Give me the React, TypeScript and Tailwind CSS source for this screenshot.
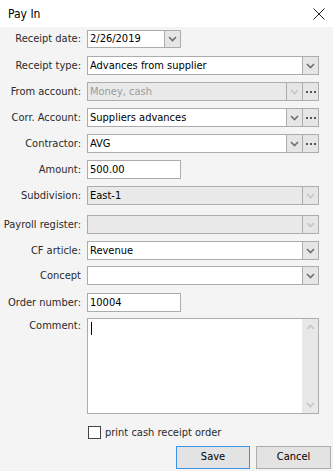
import React from "react";

const font = { fontFamily: '"DejaVu Sans Condensed", "DejaVu Sans", sans-serif' };

function Chevron({ disabled }: { disabled?: boolean }) {
  return (
    <svg width="9" height="6" viewBox="0 0 9 6">
      <path d="M1 1 L4.5 4.5 L8 1" fill="none" stroke={disabled ? "#c4c4c4" : "#6f6f6f"} strokeWidth="1.6" />
    </svg>
  );
}

function ArrowBtn({ disabled }: { disabled?: boolean }) {
  return (
    <div className="w-[16px] h-full border-l border-[#acacac] bg-[#e6e6e6] flex items-center justify-center">
      <Chevron disabled={disabled} />
    </div>
  );
}

function Dots() {
  return (
    <div className="w-[16px] h-full border border-l-0 border-[#acacac] bg-[#e6e6e6] flex items-center justify-center gap-[2px]">
      <span className="w-[2px] h-[2px] bg-[#555]" />
      <span className="w-[2px] h-[2px] bg-[#555]" />
      <span className="w-[2px] h-[2px] bg-[#555]" />
    </div>
  );
}

function Row({ label, top, children, alignTop }: { label: string; top: string; children: React.ReactNode; alignTop?: boolean }) {
  return (
    <div className={`flex ${alignTop ? "items-start" : "items-center"} ${top}`}>
      <div className={`w-[87px] pr-[6px] text-right text-[#2a2a2a] whitespace-nowrap leading-[16px] ${alignTop ? "pt-[0px]" : ""}`}>{label}</div>
      {children}
    </div>
  );
}

function Select({ value, disabled, dots, grey, greyText }: { value?: string; disabled?: boolean; dots?: boolean; grey?: boolean; greyText?: boolean }) {
  return (
    <div className="flex h-[19px] w-[232px]">
      <div className={`flex-1 flex border border-[#acacac] ${grey ? "bg-[#e9e9e9]" : "bg-white"}`}>
        <div className={`flex-1 pl-[2px] leading-[17px] ${greyText ? "text-[#9b9b9b]" : "text-black"}`}>{value}</div>
        <ArrowBtn disabled={disabled} />
      </div>
      {dots && <Dots />}
    </div>
  );
}

export default function App() {
  return (
    <div className="w-[333px] h-[471px] bg-[#f4f4f4] text-[11px] overflow-hidden" style={font}>
      <div className="h-[27px] bg-white flex items-center justify-between pl-[8px] pr-[8px]">
        <span className="text-[12px] text-black">Pay In</span>
        <svg width="12" height="12" viewBox="0 0 12 12">
          <path d="M0.5 0.5 L11.5 11.5 M11.5 0.5 L0.5 11.5" stroke="#222" strokeWidth="1" />
        </svg>
      </div>

      <div className="flex flex-col">
        <Row label="Receipt date:" top="mt-[3px]">
          <div className="flex h-[18px] w-[94px] border border-[#acacac] bg-white">
            <div className="flex-1 pl-[2px] leading-[16px]">2/26/2019</div>
            <ArrowBtn />
          </div>
        </Row>
        <Row label="Receipt type:" top="mt-[8px]">
          <Select value="Advances from supplier" />
        </Row>
        <Row label="From account:" top="mt-[7px]">
          <Select value="Money, cash" disabled grey greyText dots />
        </Row>
        <Row label="Corr. Account:" top="mt-[7px]">
          <Select value="Suppliers advances" dots />
        </Row>
        <Row label="Contractor:" top="mt-[7px]">
          <Select value="AVG" dots />
        </Row>
        <Row label="Amount:" top="mt-[7px]">
          <div className="h-[19px] w-[94px] border border-[#acacac] bg-white pl-[2px] leading-[17px]">500.00</div>
        </Row>
        <Row label="Subdivision:" top="mt-[7px]">
          <Select value="East-1" disabled grey />
        </Row>
        <Row label="Payroll register:" top="mt-[10px]">
          <Select disabled grey />
        </Row>
        <Row label="CF article:" top="mt-[7px]">
          <Select value="Revenue" />
        </Row>
        <Row label="Concept" top="mt-[6px]">
          <Select />
        </Row>
        <Row label="Order number:" top="mt-[8px]">
          <div className="h-[19px] w-[94px] border border-[#acacac] bg-white pl-[2px] leading-[17px]">10004</div>
        </Row>
        <Row label="Comment:" top="mt-[6px]" alignTop>
          <div className="flex h-[96px] w-[232px] border border-[#acacac] bg-white">
            <div className="flex-1 pl-[3px] pt-[3px]">
              <div className="w-[1px] h-[13px] bg-black" />
            </div>
            <div className="w-[16px] h-full bg-[#e8e8e8] flex flex-col items-center justify-between py-[5px]">
              <svg width="9" height="6" viewBox="0 0 9 6">
                <path d="M1 5 L4.5 1.5 L8 5" fill="none" stroke="#c6c6c6" strokeWidth="1.6" />
              </svg>
              <Chevron disabled />
            </div>
          </div>
        </Row>

        <div className="flex items-center mt-[12px] ml-[88px] gap-[4px] leading-[13px]">
          <div className="w-[13px] h-[13px] border border-[#444] bg-white" />
          <span className="text-[#2a2a2a]">print cash receipt order</span>
        </div>

        <div className="flex justify-end gap-[6px] mt-[7px] pr-[2px]">
          <button className="w-[74px] h-[23px] border border-[#3d93e6] bg-[#e3e3e3] text-black">Save</button>
          <button className="w-[75px] h-[23px] border border-[#adadad] bg-[#e3e3e3] text-black">Cancel</button>
        </div>
      </div>
    </div>
  );
}
